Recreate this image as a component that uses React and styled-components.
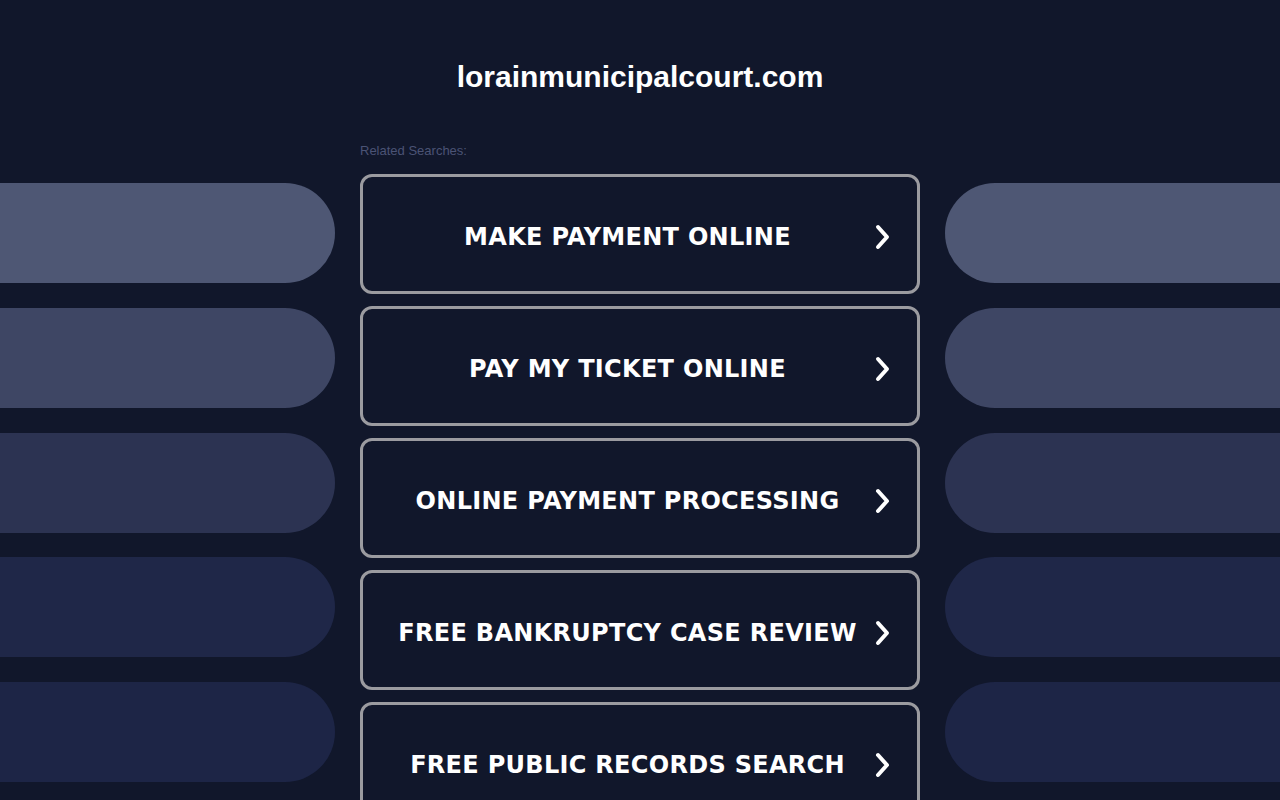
import React from "react";
import styled, { createGlobalStyle } from "styled-components";

const Global = createGlobalStyle`
  html, body { margin: 0; padding: 0; background: #11172b; }
  body { font-family: "Liberation Sans", Arial, sans-serif; overflow: hidden; }
`;

const Page = styled.div`
  width: 1280px;
  height: 800px;
  overflow: hidden;
  background: #11172b;
`;

const Header = styled.header`
  height: 140px;
  display: flex;
  justify-content: center;
  align-items: flex-start;
`;

const Title = styled.h1`
  margin: 58px 0 0;
  font-family: "Liberation Sans", Arial, sans-serif;
  font-weight: 700;
  font-size: 30px;
  line-height: 38px;
  color: #ffffff;
`;

const Body = styled.div`
  display: grid;
  grid-template-columns: 1fr 560px 1fr;
  column-gap: 25px;
`;

const Side = styled.div`
  display: flex;
  flex-direction: column;
  gap: 24.75px;
  padding-top: 43px;
`;

const Pill = styled.div`
  height: 100px;
  background: ${(p) => p.$color};
  border-radius: ${(p) => (p.$side === "left" ? "0 50px 50px 0" : "50px 0 0 50px")};
`;

const Center = styled.div`
  display: flex;
  flex-direction: column;
`;

const Label = styled.div`
  font-family: "Liberation Sans", Arial, sans-serif;
  font-size: 13px;
  line-height: 20px;
  color: #4b5375;
  margin: 1px 0 13px;
`;

const List = styled.div`
  display: flex;
  flex-direction: column;
  gap: 12px;
`;

const Button = styled.a`
  box-sizing: border-box;
  height: 120px;
  border: 3px solid #9b9ba0;
  border-radius: 12px;
  display: flex;
  align-items: center;
  padding: 5px 26px 0 19px;
  color: #ffffff;
  text-decoration: none;
  cursor: pointer;
`;

const ButtonText = styled.span`
  flex: 1;
  text-align: center;
  font-family: "DejaVu Sans", Verdana, sans-serif;
  font-weight: 700;
  font-size: 24px;
  letter-spacing: 0.3px;
  white-space: nowrap;
`;

const Arrow = styled.svg`
  width: 18px;
  height: 26px;
  flex: none;
`;

const Chevron = () => (
  <Arrow viewBox="0 0 18 26">
    <polyline
      points="5,3 14,13 5,23"
      fill="none"
      stroke="#ffffff"
      strokeWidth="4"
      strokeLinecap="round"
      strokeLinejoin="round"
    />
  </Arrow>
);

const colors = ["#4e5774", "#3e4664", "#2c3352", "#1f2748", "#1d2546"];
const items = [
  "MAKE PAYMENT ONLINE",
  "PAY MY TICKET ONLINE",
  "ONLINE PAYMENT PROCESSING",
  "FREE BANKRUPTCY CASE REVIEW",
  "FREE PUBLIC RECORDS SEARCH",
];

export default function App() {
  return (
    <Page>
      <Global />
      <Header>
        <Title>lorainmunicipalcourt.com</Title>
      </Header>
      <Body>
        <Side>
          {colors.map((c, i) => (
            <Pill key={i} $color={c} $side="left" />
          ))}
        </Side>
        <Center>
          <Label>Related Searches:</Label>
          <List>
            {items.map((t) => (
              <Button key={t}>
                <ButtonText>{t}</ButtonText>
                <Chevron />
              </Button>
            ))}
          </List>
        </Center>
        <Side>
          {colors.map((c, i) => (
            <Pill key={i} $color={c} $side="right" />
          ))}
        </Side>
      </Body>
    </Page>
  );
}
